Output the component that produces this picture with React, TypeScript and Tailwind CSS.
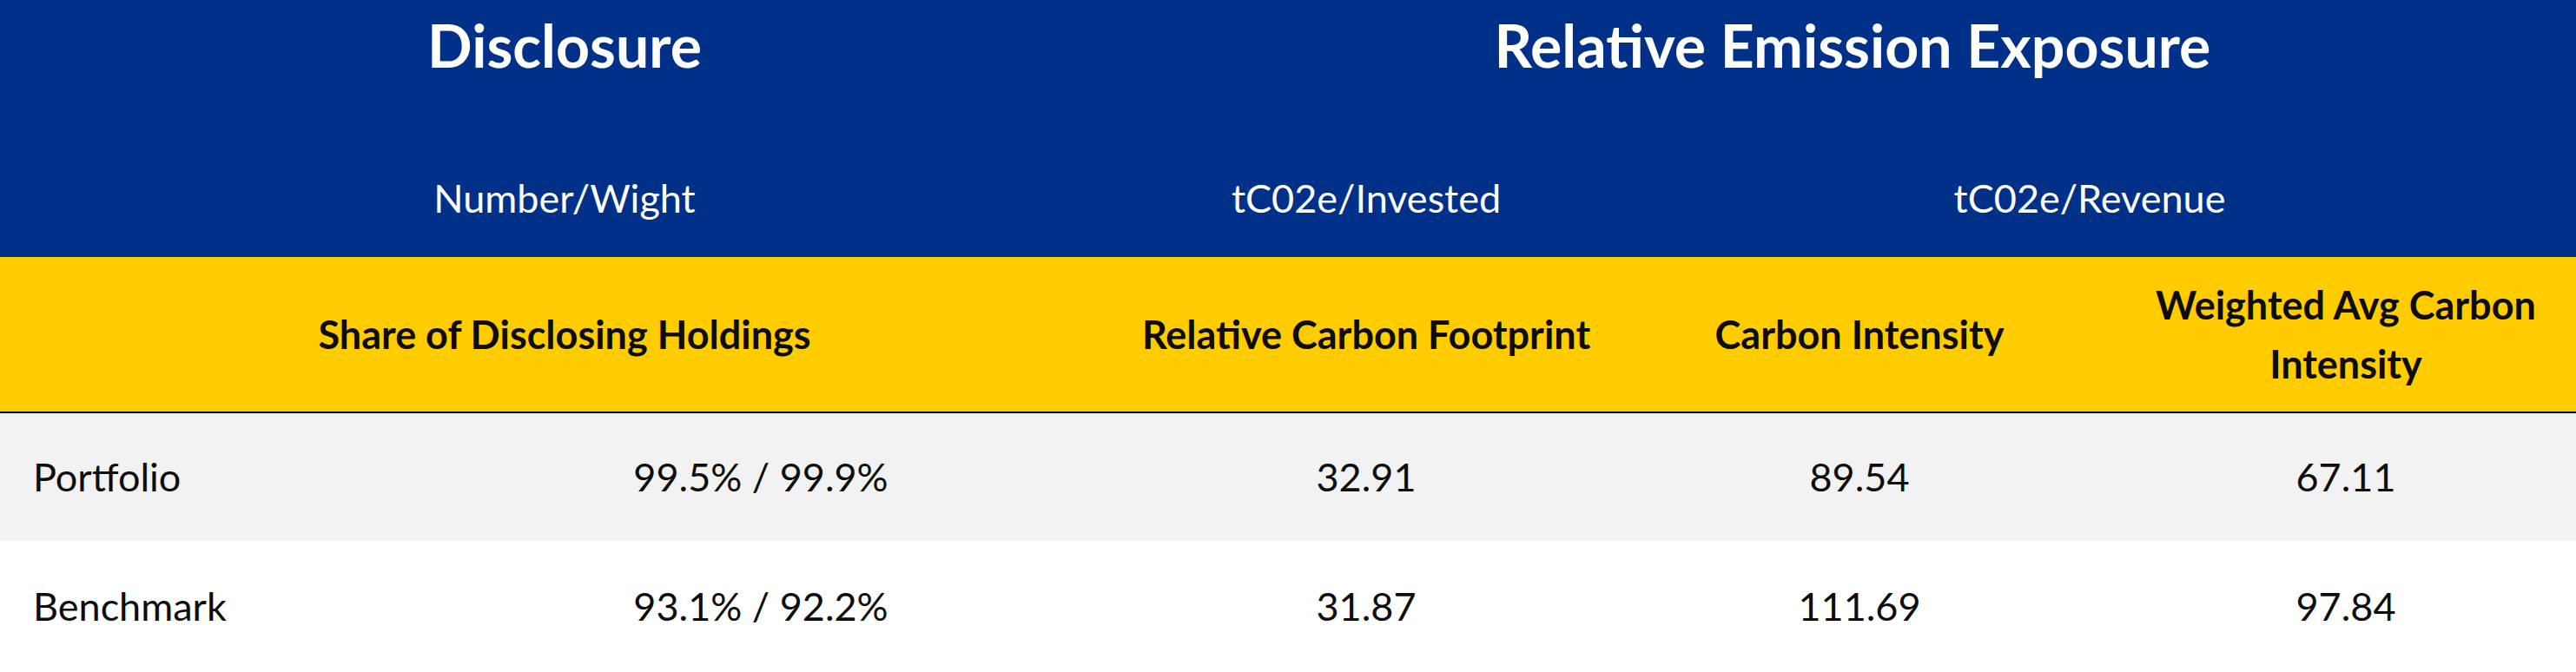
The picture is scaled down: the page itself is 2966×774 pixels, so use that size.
const rows = [
  { label: 'Portfolio', share: '99.5% / 99.9%', footprint: '32.91', intensity: '89.54', weighted: '67.11', bg: 'bg-[#f2f2f2]', h: 'h-[147px]' },
  { label: 'Benchmark', share: '93.1% / 92.2%', footprint: '31.87', intensity: '111.69', weighted: '97.84', bg: 'bg-white', h: 'h-[151px]' },
]

export default function App() {
  return (
    <div className="w-[2966px] h-[774px] bg-white text-[#0d0d0d] font-['Lato','Liberation_Sans',sans-serif]">
      {/* Blue group header */}
      <div className="bg-[#003087] text-white">
        <div className="grid grid-cols-[1300px_1666px] h-[104px] items-center">
          <div className="text-center text-[68px] font-bold leading-none">Disclosure</div>
          <div className="text-center text-[68px] font-bold leading-none">Relative Emission Exposure</div>
        </div>
        <div className="grid grid-cols-[1300px_546px_1120px] h-[192px] items-center pt-[57px] text-[45px] leading-none">
          <div className="text-center">Number/Wight</div>
          <div className="text-center">tC02e/Invested</div>
          <div className="text-center">tC02e/Revenue</div>
        </div>
      </div>

      {/* Yellow metric header */}
      <div className="grid grid-cols-[1300px_546px_590px_530px] h-[180px] items-center bg-[#ffcc00] border-b-2 border-black font-bold text-[45px]">
        <div className="text-center leading-none">Share of Disclosing Holdings</div>
        <div className="text-center leading-none">Relative Carbon Footprint</div>
        <div className="text-center leading-none">Carbon Intensity</div>
        <div className="text-center leading-[68px] px-4">Weighted Avg Carbon Intensity</div>
      </div>

      {/* Data rows */}
      {rows.map((r) => (
        <div
          key={r.label}
          className={`grid grid-cols-[452px_848px_546px_590px_530px] items-center text-[45px] leading-none ${r.bg} ${r.h}`}
        >
          <div className="pl-[38px]">{r.label}</div>
          <div className="text-center">{r.share}</div>
          <div className="text-center">{r.footprint}</div>
          <div className="text-center">{r.intensity}</div>
          <div className="text-center">{r.weighted}</div>
        </div>
      ))}
    </div>
  )
}
